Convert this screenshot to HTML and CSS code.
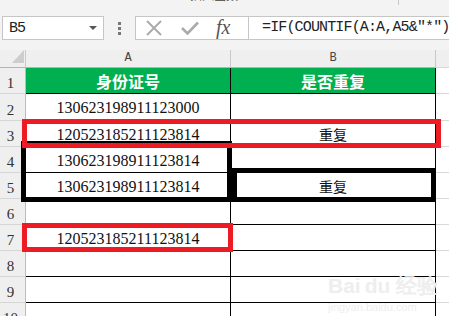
FILE: index.html
```html
<!DOCTYPE html>
<html lang="zh">
<head>
    <meta charset="UTF-8">
    <title>身份证号 查重</title>
    <link rel="stylesheet" href="styles.css">
</head>
<body>

    <!-- 顶部被截掉的功能区 -->
    <div class="top">
        <span class="top-cut">插入函数</span>
        <span class="top-line"></span>
    </div>

    <!-- 编辑栏 -->
    <div class="fbar">
        <div class="namebox"><span>B5</span><span class="caret"></span></div>
        <div class="dots">
            <svg width="3" height="13" viewBox="0 0 3 13"><rect x="0" y="0" width="3" height="3" fill="#777"/><rect x="0" y="5" width="3" height="3" fill="#777"/><rect x="0" y="10" width="3" height="3" fill="#777"/></svg>
        </div>
        <div class="fxbox">
            <svg class="ico-x" width="16" height="16" viewBox="0 0 16 16"><path d="M1 1 L15 15 M15 1 L1 15" stroke="#ababab" stroke-width="2" fill="none"/></svg>
            <svg class="ico-ok" width="18" height="14" viewBox="0 0 18 14"><path d="M1 7 L6.5 12.5 L17 1.5" stroke="#ababab" stroke-width="2.6" fill="none"/></svg>
            <span class="fx">fx</span>
        </div>
        <div class="formula">=IF(COUNTIF(A:A,A5&amp;″*″))</div>
    </div>

    <!-- 表格 -->
    <div class="sheet">
        <div class="row head">
            <div class="corner"><span class="tri"></span></div>
            <div class="ch">A</div>
            <div class="ch">B</div>
            <div class="ch rest"></div>
        </div>
        <div class="row">
            <div class="rh">1</div>
            <div class="cell green">身份证号</div>
            <div class="cell green">是否重复</div>
            <div class="rest"></div>
        </div>
        <div class="row tall">
            <div class="rh">2</div>
            <div class="cell num">130623198911123000</div>
            <div class="cell"></div>
            <div class="rest"></div>
        </div>
        <div class="row">
            <div class="rh">3</div>
            <div class="cell num">120523185211123814</div>
            <div class="cell cn">重复</div>
            <div class="rest"></div>
        </div>
        <div class="row">
            <div class="rh">4</div>
            <div class="cell num">130623198911123814</div>
            <div class="cell"></div>
            <div class="rest"></div>
        </div>
        <div class="row">
            <div class="rh">5</div>
            <div class="cell num">130623198911123814</div>
            <div class="cell cn">重复</div>
            <div class="rest"></div>
        </div>
        <div class="row">
            <div class="rh">6</div>
            <div class="cell"></div>
            <div class="cell"></div>
            <div class="rest"></div>
        </div>
        <div class="row">
            <div class="rh">7</div>
            <div class="cell num">120523185211123814</div>
            <div class="cell"></div>
            <div class="rest"></div>
        </div>
        <div class="row">
            <div class="rh">8</div>
            <div class="cell"></div>
            <div class="cell"></div>
            <div class="rest"></div>
        </div>
        <div class="row">
            <div class="rh">9</div>
            <div class="cell"></div>
            <div class="cell"></div>
            <div class="rest"></div>
        </div>
        <div class="row">
            <div class="rh">10</div>
            <div class="cell"></div>
            <div class="cell"></div>
            <div class="rest"></div>
        </div>

        <!-- 标注框 -->
        <div class="mark black box-a"></div>
        <div class="mark black box-b"></div>
        <div class="mark red box-r1"></div>
        <div class="mark red box-r2"></div>

        <!-- 水印 -->
        <div class="watermark">
            <div class="wm-big">Bai<span class="wm-du">du</span> 经验</div>
            <div class="wm-small">jingyan.baidu.com</div>
        </div>
    </div>

</body>
</html>
```

FILE: styles.css
```css
body {
    margin: 0;
    width: 449px;
    height: 316px;
    overflow: hidden;
    background: #fff;
    font-family: "Liberation Serif", serif;
}

/* 顶部 */
.top {
    height: 13px;
    background: #f3f3f3;
    overflow: hidden;
    display: flex;
    align-items: flex-start;
}
.top-cut {
    margin-left: 190px;
    margin-top: -13px;
    font: 12px/15px "Noto Sans CJK SC", sans-serif;
    color: #444;
}
.top-line {
    margin-left: 160px;
    width: 1px;
    height: 5px;
    background: #c8c8c8;
}

/* 编辑栏 */
.fbar {
    height: 37px;
    background: #f3f3f3;
    display: flex;
    align-items: flex-start;
    padding-top: 3px;
    box-sizing: border-box;
}
.namebox {
    margin-left: 2px;
    width: 102px;
    height: 24px;
    box-sizing: border-box;
    border: 1px solid #c6c6c6;
    background: #fff;
    display: flex;
    align-items: center;
    justify-content: space-between;
    padding: 0 6px 0 6px;
    font: 15px "Liberation Mono", monospace;
    letter-spacing: -1px;
    color: #222;
}
.caret {
    width: 0;
    height: 0;
    border-left: 4px solid transparent;
    border-right: 4px solid transparent;
    border-top: 4px solid #555;
}
.dots {
    width: 31px;
    height: 24px;
    display: flex;
    align-items: center;
    justify-content: center;
}
.fxbox {
    width: 113px;
    height: 24px;
    box-sizing: border-box;
    border: 1px solid #c6c6c6;
    border-right: none;
    background: #fff;
    display: flex;
    align-items: center;
}
.ico-x {
    margin-left: 10px;
}
.ico-ok {
    margin-left: 19px;
}
.fx {
    margin-left: 17px;
    font: italic 20px "Liberation Serif", serif;
    color: #555;
    margin-top: -2px;
}
.formula {
    flex: 1;
    height: 24px;
    box-sizing: border-box;
    border: 1px solid #c6c6c6;
    border-right: none;
    background: #fff;
    padding-left: 13px;
    font: 15px/22px "Liberation Mono", monospace;
    letter-spacing: -0.85px;
    white-space: nowrap;
    overflow: hidden;
    color: #222;
}

/* 表格 */
.sheet {
    position: relative;
}
.row {
    display: grid;
    grid-template-columns: 26px 205px 205px 1fr;
    height: 26px;
}
.row.tall {
    height: 27px;
}
.row.head {
    height: 18px;
    background: #efefef;
}
.corner,
.ch {
    box-sizing: border-box;
    border-bottom: 1px solid #b4b4b4;
}
.corner {
    border-right: 1px solid #c8c8c8;
    display: flex;
    justify-content: flex-end;
    align-items: flex-start;
    padding: 0 1px 0 0;
}
.tri {
    width: 0;
    height: 0;
    border-left: 12px solid transparent;
    border-bottom: 13px solid #cdcdcd;
}
.ch {
    border-right: 1px solid #c8c8c8;
    text-align: center;
    font: 12px/17px "Liberation Mono", monospace;
    color: #444;
}
.ch.rest {
    border-right: none;
}
.rh {
    box-sizing: border-box;
    background: #efefef;
    border-right: 1px solid #bcbcbc;
    border-bottom: 1px solid #d6d6d6;
    display: flex;
    align-items: flex-end;
    justify-content: center;
    padding: 0 4px 1px 0;
    font-size: 15px;
    line-height: 18px;
    color: #333;
}
.cell {
    box-sizing: border-box;
    border-right: 1px solid #000;
    border-bottom: 1px solid #000;
    display: flex;
    align-items: center;
    justify-content: center;
}
.rest {
    box-sizing: border-box;
    border-bottom: 1px solid #d9d9d9;
}
.green {
    background: #00b050;
    color: #fff;
    font: bold 16px "Noto Sans CJK SC", sans-serif;
}
.num {
    font-size: 16px;
    padding-top: 2px;
    color: #111;
}
.cn {
    font: 14px "Noto Sans CJK SC", sans-serif;
    color: #111;
}

/* 标注框 */
.mark {
    position: absolute;
    box-sizing: border-box;
    border: 5px solid;
}
.black {
    border-color: #000;
}
.red {
    border-color: #ed1c24;
}
.box-a {
    left: 21px;
    top: 91px;
    width: 211px;
    height: 61px;
}
.box-b {
    left: 232px;
    top: 118px;
    width: 204px;
    height: 34px;
}
.box-r1 {
    left: 22px;
    top: 69px;
    width: 419px;
    height: 29px;
}
.box-r2 {
    left: 22px;
    top: 173px;
    width: 211px;
    height: 29px;
}

/* 水印 */
.watermark {
    position: absolute;
    left: 328px;
    top: 222px;
    color: #eeeeee;
    font-family: "Liberation Sans", sans-serif;
}
.wm-big {
    font-size: 21px;
    font-weight: bold;
}
.wm-du {
    margin-left: 4px;
}
.wm-small {
    font-size: 11px;
    margin-top: 1px;
}
```
